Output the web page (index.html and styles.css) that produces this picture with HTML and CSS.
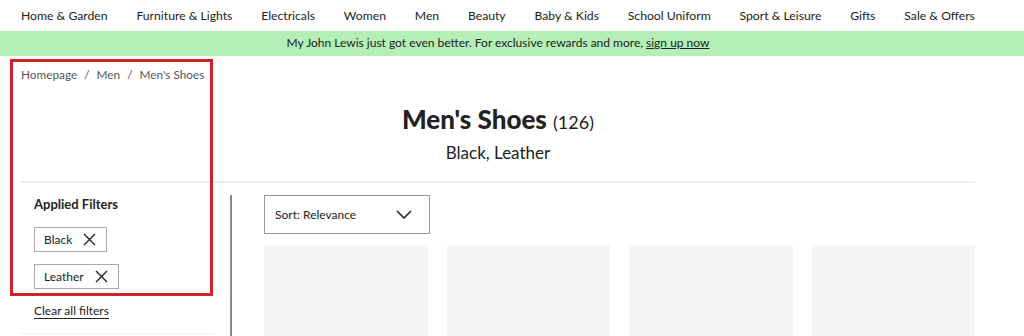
FILE: index.html
```html
<!DOCTYPE html>
<html lang="en">

<head>
    <meta charset="UTF-8">
    <title>Men's Shoes</title>
    <link rel="stylesheet" href="styles.css">
</head>

<body>
    <ul id="nav">
        <li>Home &amp; Garden</li>
        <li>Furniture &amp; Lights</li>
        <li>Electricals</li>
        <li>Women</li>
        <li>Men</li>
        <li>Beauty</li>
        <li>Baby &amp; Kids</li>
        <li>School Uniform</li>
        <li>Sport &amp; Leisure</li>
        <li>Gifts</li>
        <li>Sale &amp; Offers</li>
    </ul>
    <div id="promo">My John Lewis just got even better. For exclusive rewards and more, <a href="#">sign up now</a></div>

    <div id="page">
        <div id="crumbs">Homepage <span class="sep">/</span> Men <span class="sep">/</span> Men's Shoes</div>

        <div id="title">
            <h1>Men's Shoes <span class="count">(126)</span></h1>
            <p>Black, Leather</p>
        </div>

        <div id="body">
            <div id="filters">
                <h2>Applied Filters</h2>
                <span class="chip">Black
                    <svg width="13" height="13" viewBox="0 0 13 13"><path d="M1 1L12 12M12 1L1 12" stroke="#222" stroke-width="1.4" fill="none"/></svg>
                </span>
                <span class="chip">Leather
                    <svg width="13" height="13" viewBox="0 0 13 13"><path d="M1 1L12 12M12 1L1 12" stroke="#222" stroke-width="1.4" fill="none"/></svg>
                </span>
                <a href="#" class="clear">Clear all filters</a>
            </div>
            <div class="divider"></div>
            <div id="results">
                <div class="sort">Sort: Relevance
                    <svg width="16" height="9" viewBox="0 0 16 9"><path d="M1 1L8 8L15 1" stroke="#222" stroke-width="1.5" fill="none"/></svg>
                </div>
                <div class="grid">
                    <div class="tile"></div>
                    <div class="tile"></div>
                    <div class="tile"></div>
                    <div class="tile"></div>
                </div>
            </div>
        </div>
    </div>

    <!-- highlight box -->
    <div id="mark"></div>
</body>

</html>
```
FILE: styles.css
```css
* {
    margin: 0;
    padding: 0;
    box-sizing: border-box;
}

body {
    font-family: Lato, "Liberation Sans", sans-serif;
    color: #222;
    background: #fff;
    overflow: hidden;
}

li {
    list-style: none;
}

a {
    color: #222;
}

#nav {
    height: 30px;
    padding: 0 49px 0 21px;
    display: flex;
    justify-content: space-between;
    align-items: center;
    font-size: 12.2px;
}

#promo {
    height: 25px;
    margin-top: 1px;
    background-color: #b4efb6;
    text-align: center;
    font-size: 12px;
    line-height: 24px;
    padding-right: 28px;
}

#page {
    padding: 0 49px 0 21px;
}

#crumbs {
    margin-top: 11px;
    font-size: 11.8px;
    line-height: 16px;
    color: #555;
}

#crumbs .sep {
    margin: 0 4px 0 4px;
}

#title {
    text-align: center;
    margin-top: 19px;
    padding-bottom: 16px;
    border-bottom: 2px solid #eeeef0;
}

#title h1 {
    font-size: 26px;
    font-weight: 900;
    line-height: 34px;
}

#title h1 .count {
    font-size: 18px;
    font-weight: normal;
}

#title p {
    font-size: 17px;
    line-height: 24px;
    margin-top: 2px;
}

#body {
    display: flex;
}

#filters {
    width: 194px;
    padding: 13px 0 0 13px;
    border-bottom: 1px solid #eeeef0;
    height: 151px;
    display: flex;
    flex-direction: column;
    align-items: flex-start;
}

#filters h2 {
    font-size: 13px;
    font-weight: bold;
    line-height: 16px;
}

.chip {
    display: flex;
    align-items: center;
    gap: 11px;
    height: 25px;
    padding: 0 10px 0 9px;
    border: 1px solid #aaa;
    font-size: 12px;
    margin-top: 15px;
}

.chip + .chip {
    margin-top: 12px;
}

.clear {
    margin-top: 14px;
    font-size: 12px;
    text-decoration: none;
    border-bottom: 1px solid #222;
    line-height: 15px;
}

.divider {
    width: 2px;
    background: #888;
    margin: 12px 32px 0 15px;
    height: 141px;
}

#results {
    flex: 1;
    padding-top: 12px;
}

.sort {
    width: 166px;
    height: 39px;
    border: 1px solid #999;
    display: flex;
    align-items: center;
    justify-content: space-between;
    padding: 0 17px 0 10px;
    font-size: 12px;
}

.grid {
    margin-top: 11px;
    display: grid;
    grid-template-columns: repeat(4, 1fr);
    gap: 19px;
}

.tile {
    height: 100px;
    background: #f5f5f7;
}

#mark {
    position: absolute;
    left: 10px;
    top: 59px;
    width: 203px;
    height: 237px;
    border: 3px solid #d2222b;
}
```
